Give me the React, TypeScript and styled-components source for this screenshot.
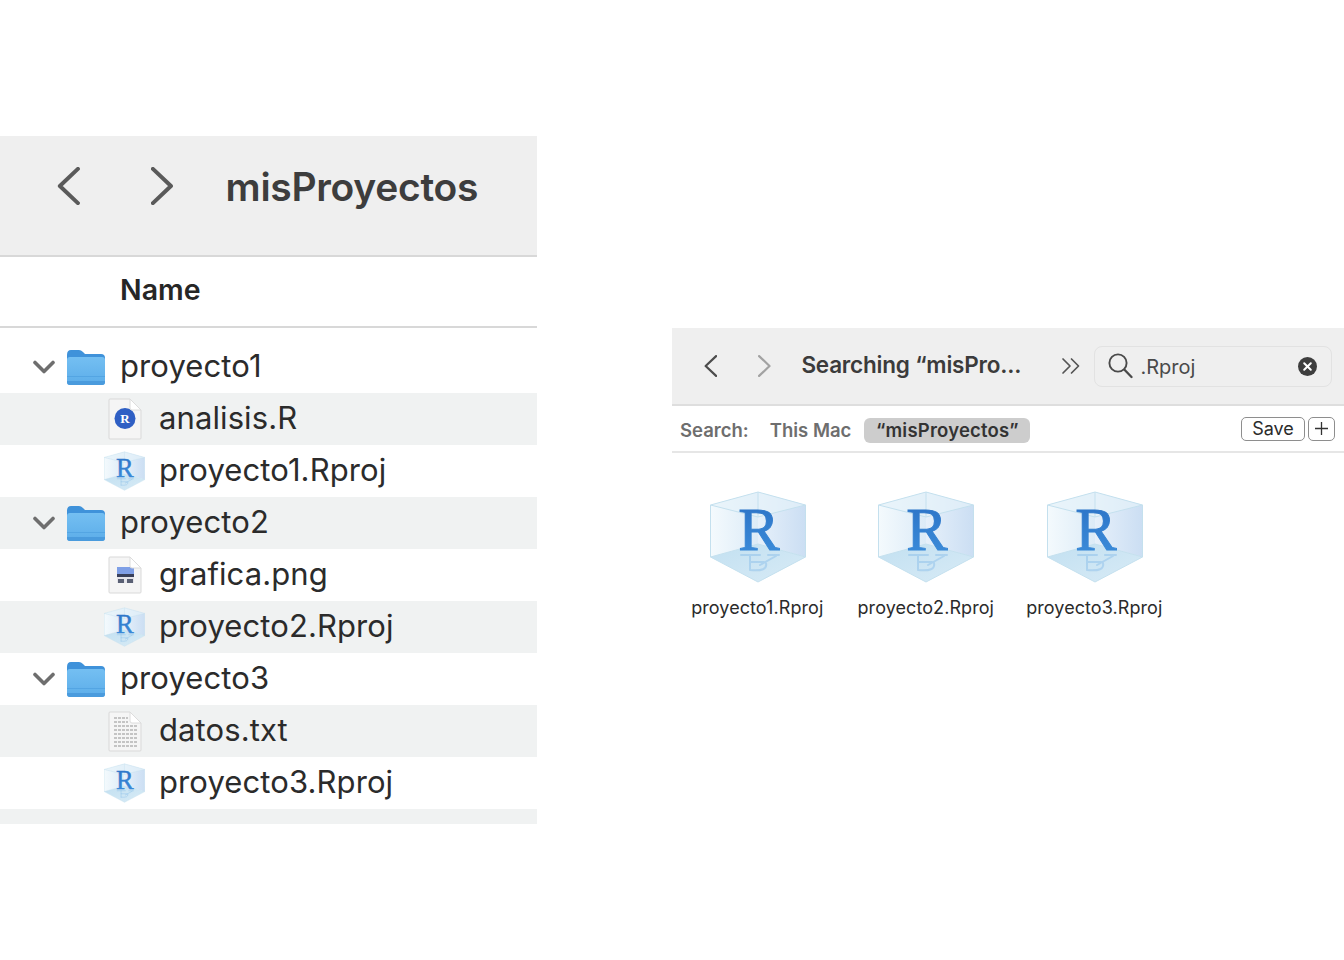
import { useId } from "react";
import styled, { createGlobalStyle } from "styled-components";

const GlobalStyle = createGlobalStyle`
  html, body {
    margin: 0;
    padding: 0;
    background: #ffffff;
  }
  body {
    font-family: Inter, "Liberation Sans", sans-serif;
  }
`;

type FileKind = "r" | "rproj" | "png" | "txt";

const tree: { name: string; files: { name: string; kind: FileKind }[] }[] = [
  {
    name: "proyecto1",
    files: [
      { name: "analisis.R", kind: "r" },
      { name: "proyecto1.Rproj", kind: "rproj" },
    ],
  },
  {
    name: "proyecto2",
    files: [
      { name: "grafica.png", kind: "png" },
      { name: "proyecto2.Rproj", kind: "rproj" },
    ],
  },
  {
    name: "proyecto3",
    files: [
      { name: "datos.txt", kind: "txt" },
      { name: "proyecto3.Rproj", kind: "rproj" },
    ],
  },
];

const results = ["proyecto1.Rproj", "proyecto2.Rproj", "proyecto3.Rproj"];

function Chevron({ dir, size, color, width }: { dir: "left" | "right"; size: number; color: string; width: number }) {
  return (
    <svg width={size * 0.6} height={size} viewBox="0 0 12 20" fill="none">
      <path
        d={dir === "left" ? "M11 1 L1.5 10 L11 19" : "M1 1 L10.5 10 L1 19"}
        stroke={color}
        strokeWidth={width}
        strokeLinecap="round"
        strokeLinejoin="round"
        vectorEffect="non-scaling-stroke"
      />
    </svg>
  );
}

function Disclosure() {
  return (
    <svg width="22" height="14" viewBox="0 0 22 14" fill="none">
      <path d="M2 2.5 L11 11.5 L20 2.5" stroke="#6e6e6e" strokeWidth="3.6" strokeLinecap="round" strokeLinejoin="round" />
    </svg>
  );
}

function FolderIcon() {
  const id = useId();
  return (
    <svg width="40" height="37" viewBox="0 0 40 37">
      <defs>
        <linearGradient id={id} x1="0" y1="0" x2="0" y2="1">
          <stop offset="0" stopColor="#74bff2" />
          <stop offset="1" stopColor="#5cade9" />
        </linearGradient>
      </defs>
      <path d="M1 6 Q1 1 5 1 H13 Q15 1 17 3 L19 5 H35 Q39 5 39 9 V14 H1 Z" fill="#3f92da" />
      <rect x="1" y="8" width="38" height="28" rx="3" fill={`url(#${id})`} />
      <rect x="1" y="27" width="38" height="1" fill="#4d9fe0" opacity="0.7" />
      <path d="M1 33 Q1 36 4 36 H36 Q39 36 39 33 V32 H1 Z" fill="#4a9bdd" />
    </svg>
  );
}

function DocIcon({ children, height }: { children?: React.ReactNode; height: number }) {
  return (
    <svg width="34" height={height} viewBox={`0 0 34 ${height}`}>
      <path
        d={`M2 1 H22 L33 12 V${height - 2} Q33 ${height - 1} 32 ${height - 1} H2 Q1 ${height - 1} 1 ${height - 2} V2 Q1 1 2 1 Z`}
        fill="#f5f5f5"
        stroke="#d9d9d9"
      />
      {children}
      <path d="M22 1 V10 Q22 12 24 12 H33 Z" fill="#ffffff" stroke="#dcdcdc" />
    </svg>
  );
}

function RDoc() {
  return (
    <DocIcon height={42}>
      <circle cx="17" cy="20.5" r="10.5" fill="#2f5fc4" />
      <text x="17" y="25" textAnchor="middle" fontFamily="Liberation Serif, serif" fontWeight="700" fontSize="13" fill="#ffffff">
        R
      </text>
    </DocIcon>
  );
}

function PngDoc() {
  return (
    <DocIcon height={38}>
      <g filter="blur(0.5px)">
        <rect x="9" y="11" width="17" height="7" fill="#7f9fe6" />
        <rect x="9" y="18" width="17" height="3" fill="#39405a" />
        <rect x="9" y="21" width="17" height="6" fill="#e4e4ea" />
        <rect x="10" y="23" width="6" height="4" fill="#5a6074" />
        <rect x="19" y="23" width="6" height="4" fill="#5a6074" />
      </g>
    </DocIcon>
  );
}

function TxtDoc() {
  return (
    <DocIcon height={41}>
      <g stroke="#c4c4c4" strokeWidth="2.2" strokeDasharray="3 1" filter="blur(0.6px)">
        {[7, 11].map((y) => (
          <path key={y} d={`M6 ${y} H20`} />
        ))}
        {[15, 19, 23, 27, 31, 35].map((y) => (
          <path key={y} d={`M6 ${y} H29`} />
        ))}
      </g>
    </DocIcon>
  );
}

function CubeIcon({ width }: { width: number }) {
  const id = useId();
  return (
    <svg width={width} height={(width * 94) / 96} viewBox="0 0 96 94">
      <defs>
        <linearGradient id={`${id}l`} x1="0" y1="0" x2="1" y2="0">
          <stop offset="0" stopColor="#f4fafd" />
          <stop offset="1" stopColor="#dcebf7" />
        </linearGradient>
        <linearGradient id={`${id}r`} x1="0" y1="0" x2="1" y2="0">
          <stop offset="0" stopColor="#e6f0fa" />
          <stop offset="1" stopColor="#cbdef3" />
        </linearGradient>
        <linearGradient id={`${id}f`} x1="0" y1="0" x2="1" y2="1">
          <stop offset="0" stopColor="#c2e0f1" />
          <stop offset="1" stopColor="#d8ebf6" />
        </linearGradient>
        <linearGradient id={`${id}t`} x1="0" y1="0" x2="0" y2="1">
          <stop offset="0" stopColor="#2a70c4" />
          <stop offset="1" stopColor="#3d8fdc" />
        </linearGradient>
      </defs>
      <path d="M48 2 L0.5 15 V67 L48 54 Z" fill={`url(#${id}l)`} />
      <path d="M48 2 L95.5 15 V67 L48 54 Z" fill={`url(#${id}r)`} />
      <path d="M0.5 15 L48 2 L95.5 15 L48 27 Z" fill="#e6f2fa" opacity="0.7" />
      <path d="M0.5 67 L48 54 L95.5 67 L48 92 Z" fill={`url(#${id}f)`} />
      <path
        d="M48 2 L95.5 15 V67 L48 92 L0.5 67 V15 Z M0.5 15 L48 27 L95.5 15 M48 2 V27 M0.5 67 L48 54 L95.5 67"
        fill="none"
        stroke="#c4e0ee"
        strokeWidth="1"
      />
      <text
        x="49"
        y="60"
        textAnchor="middle"
        fontFamily="Liberation Serif, serif"
        fontSize="62"
        fill={`url(#${id}t)`}
        stroke={`url(#${id}t)`}
        strokeWidth="1"
      >
        R
      </text>
      <path
        d="M31 65 H50 M58 65 H69 M40 65 V80 M66 66 L50 75 M40 80 Q58 82 56 73 M40 72 H54"
        fill="none"
        stroke="#5aa2e2"
        strokeWidth="2"
        strokeLinecap="round"
        opacity="0.28"
      />
    </svg>
  );
}

function FileIcon({ kind }: { kind: FileKind }) {
  if (kind === "r") return <RDoc />;
  if (kind === "png") return <PngDoc />;
  if (kind === "txt") return <TxtDoc />;
  return <CubeIcon width={41} />;
}

export default function App() {
  let rowIndex = 0;
  const nextStriped = () => rowIndex++ % 2 === 1;

  return (
    <>
      <GlobalStyle />
      <Page>
        <TreePanel>
          <TreeToolbar>
            <NavGroup>
              <Chevron dir="left" size={38} color="#5a5a5a" width={4} />
              <Chevron dir="right" size={38} color="#5a5a5a" width={4} />
            </NavGroup>
            <TreeTitle>misProyectos</TreeTitle>
          </TreeToolbar>
          <ColumnHeader>
            <span>Name</span>
          </ColumnHeader>
          <TreeBody>
            {tree.map((folder) => (
              <div key={folder.name}>
                <FolderRow $striped={nextStriped()}>
                  <Disclosure />
                  <FolderIcon />
                  <RowLabel>{folder.name}</RowLabel>
                </FolderRow>
                {folder.files.map((file) => (
                  <FileRow key={file.name} $striped={nextStriped()}>
                    <FileIconSlot>
                      <FileIcon kind={file.kind} />
                    </FileIconSlot>
                    <RowLabel>{file.name}</RowLabel>
                  </FileRow>
                ))}
              </div>
            ))}
            <TreeFooter />
          </TreeBody>
        </TreePanel>

        <SearchPanel>
          <SearchToolbar>
            <SmallNav>
              <Chevron dir="left" size={22} color="#4c4c4c" width={2.2} />
              <Chevron dir="right" size={22} color="#a2a2a2" width={2.2} />
            </SmallNav>
            <SearchTitle>Searching “misPro...</SearchTitle>
            <More>
              <svg width="20" height="18" viewBox="0 0 20 18" fill="none">
                <path d="M2 2 L9 9 L2 16 M10.5 2 L17.5 9 L10.5 16" stroke="#555555" strokeWidth="1.7" strokeLinecap="round" strokeLinejoin="round" />
              </svg>
            </More>
            <SearchField>
              <svg width="25" height="26" viewBox="0 0 25 26" fill="none">
                <circle cx="10" cy="10" r="8.6" stroke="#4a4a4a" strokeWidth="1.9" />
                <path d="M16.5 16.8 L23.5 24" stroke="#4a4a4a" strokeWidth="2.3" strokeLinecap="round" />
              </svg>
              <SearchValue>.Rproj</SearchValue>
              <ClearButton>
                <svg width="19" height="19" viewBox="0 0 19 19">
                  <circle cx="9.5" cy="9.5" r="9.5" fill="#3e3e3e" />
                  <path d="M6.2 6.2 L12.8 12.8 M12.8 6.2 L6.2 12.8" stroke="#ffffff" strokeWidth="2" strokeLinecap="round" />
                </svg>
              </ClearButton>
            </SearchField>
          </SearchToolbar>

          <ScopeBar>
            <ScopeLabel>Search:</ScopeLabel>
            <ScopeOption>This Mac</ScopeOption>
            <ScopePill>“misProyectos”</ScopePill>
            <ScopeActions>
              <SaveButton>Save</SaveButton>
              <PlusButton>
                <svg width="15" height="15" viewBox="0 0 15 15">
                  <path d="M7.5 1 V14 M1 7.5 H14" stroke="#333333" strokeWidth="1.3" />
                </svg>
              </PlusButton>
            </ScopeActions>
          </ScopeBar>

          <ResultGrid>
            {results.map((name) => (
              <ResultItem key={name}>
                <CubeIcon width={96} />
                <ResultLabel>{name}</ResultLabel>
              </ResultItem>
            ))}
          </ResultGrid>
        </SearchPanel>
      </Page>
    </>
  );
}

const Page = styled.div`
  display: flex;
  align-items: flex-start;
  gap: 135px;
  width: 1344px;
  height: 960px;
  overflow: hidden;
  background: #ffffff;
`;

const TreePanel = styled.div`
  width: 537px;
  margin-top: 136px;
`;

const TreeToolbar = styled.div`
  display: flex;
  align-items: flex-start;
  height: 88px;
  padding: 31px 0 0 57px;
  background: #efefef;
  border-bottom: 2px solid #d8d8d8;
`;

const NavGroup = styled.div`
  display: flex;
  align-items: center;
  gap: 71px;
  height: 38px;
`;

const TreeTitle = styled.div`
  margin-left: 52px;
  font-size: 39px;
  line-height: 40px;
  font-weight: 600;
  color: #3d3d3d;
  letter-spacing: -0.3px;
`;

const ColumnHeader = styled.div`
  display: flex;
  align-items: center;
  height: 69px;
  padding-left: 120px;
  font-size: 28.5px;
  font-weight: 600;
  color: #262626;
  border-bottom: 2px solid #d8d8d8;

  span {
    margin-bottom: 4px;
  }
`;

const TreeBody = styled.div`
  padding-top: 13px;
`;

const RowBase = styled.div<{ $striped: boolean }>`
  display: flex;
  align-items: center;
  height: 52px;
  background: ${(p) => (p.$striped ? "#f0f2f2" : "#ffffff")};
`;

const FolderRow = styled(RowBase)`
  padding-left: 33px;
  gap: 11px;

  & > svg:nth-child(2) {
    margin-right: 3px;
  }
`;

const FileRow = styled(RowBase)`
  padding-left: 104px;
  gap: 14px;
`;

const FileIconSlot = styled.div`
  display: flex;
  align-items: center;
  justify-content: center;
  width: 41px;
`;

const RowLabel = styled.span`
  margin-bottom: 4px;
  font-size: 31px;
  letter-spacing: 0.1px;
  color: #2b2b2b;
`;

const TreeFooter = styled.div`
  height: 15px;
  background: #f0f2f2;
`;

const SearchPanel = styled.div`
  flex: 1;
  margin-top: 328px;
`;

const SearchToolbar = styled.div`
  display: flex;
  align-items: center;
  height: 76px;
  padding: 0 12px 0 32px;
  background: #efefef;
  border-bottom: 2px solid #dedede;
`;

const SmallNav = styled.div`
  display: flex;
  align-items: center;
  gap: 41px;
`;

const SearchTitle = styled.div`
  margin: 0 0 3px 30px;
  width: 260px;
  font-size: 22.5px;
  font-weight: 600;
  color: #3b3b3b;
  letter-spacing: -0.2px;
  white-space: nowrap;
`;

const More = styled.div`
  display: flex;
  align-items: center;
  width: 33px;
`;

const SearchField = styled.div`
  display: flex;
  align-items: center;
  flex: 1;
  height: 41px;
  box-sizing: border-box;
  padding: 0 14px 0 13px;
  border: 1px solid #e2e2e2;
  border-radius: 8px;
`;

const SearchValue = styled.span`
  margin: 2px 0 0 7px;
  font-size: 20px;
  color: #4a4a4a;
`;

const ClearButton = styled.span`
  display: flex;
  margin-left: auto;
`;

const ScopeBar = styled.div`
  display: flex;
  align-items: center;
  height: 45px;
  padding: 0 9px 0 8px;
  border-bottom: 2px solid #e6e6e6;
  font-size: 18.5px;
  font-weight: 600;
`;

const ScopeLabel = styled.span`
  margin-top: 3px;
  color: #6e6e6e;
`;

const ScopeOption = styled.span`
  margin: 3px 0 0 21px;
  color: #6e6e6e;
`;

const ScopePill = styled.span`
  display: flex;
  align-items: center;
  justify-content: center;
  width: 166px;
  height: 25px;
  margin: 3px 0 0 13px;
  background: #cdcdcd;
  border-radius: 6px;
  letter-spacing: 0.2px;
  color: #333333;
`;

const ScopeActions = styled.div`
  display: flex;
  gap: 3px;
  margin-left: auto;
`;

const ActionButton = styled.button`
  display: flex;
  align-items: center;
  justify-content: center;
  height: 24px;
  padding: 0;
  background: #ffffff;
  border: 1px solid #8e8e8e;
  border-radius: 5px;
  font-family: inherit;
  font-size: 18px;
  color: #2b2b2b;
`;

const SaveButton = styled(ActionButton)`
  width: 64px;
`;

const PlusButton = styled(ActionButton)`
  width: 27px;
`;

const ResultGrid = styled.div`
  display: grid;
  grid-template-columns: repeat(3, 168.5px);
  padding: 37px 0 0 1px;
`;

const ResultItem = styled.div`
  display: flex;
  flex-direction: column;
  align-items: center;
  gap: 12px;

  svg {
    margin-left: 1px;
  }
`;

const ResultLabel = styled.span`
  font-size: 18px;
  line-height: 24px;
  letter-spacing: 0.07px;
  color: #2b2b2b;
`;
